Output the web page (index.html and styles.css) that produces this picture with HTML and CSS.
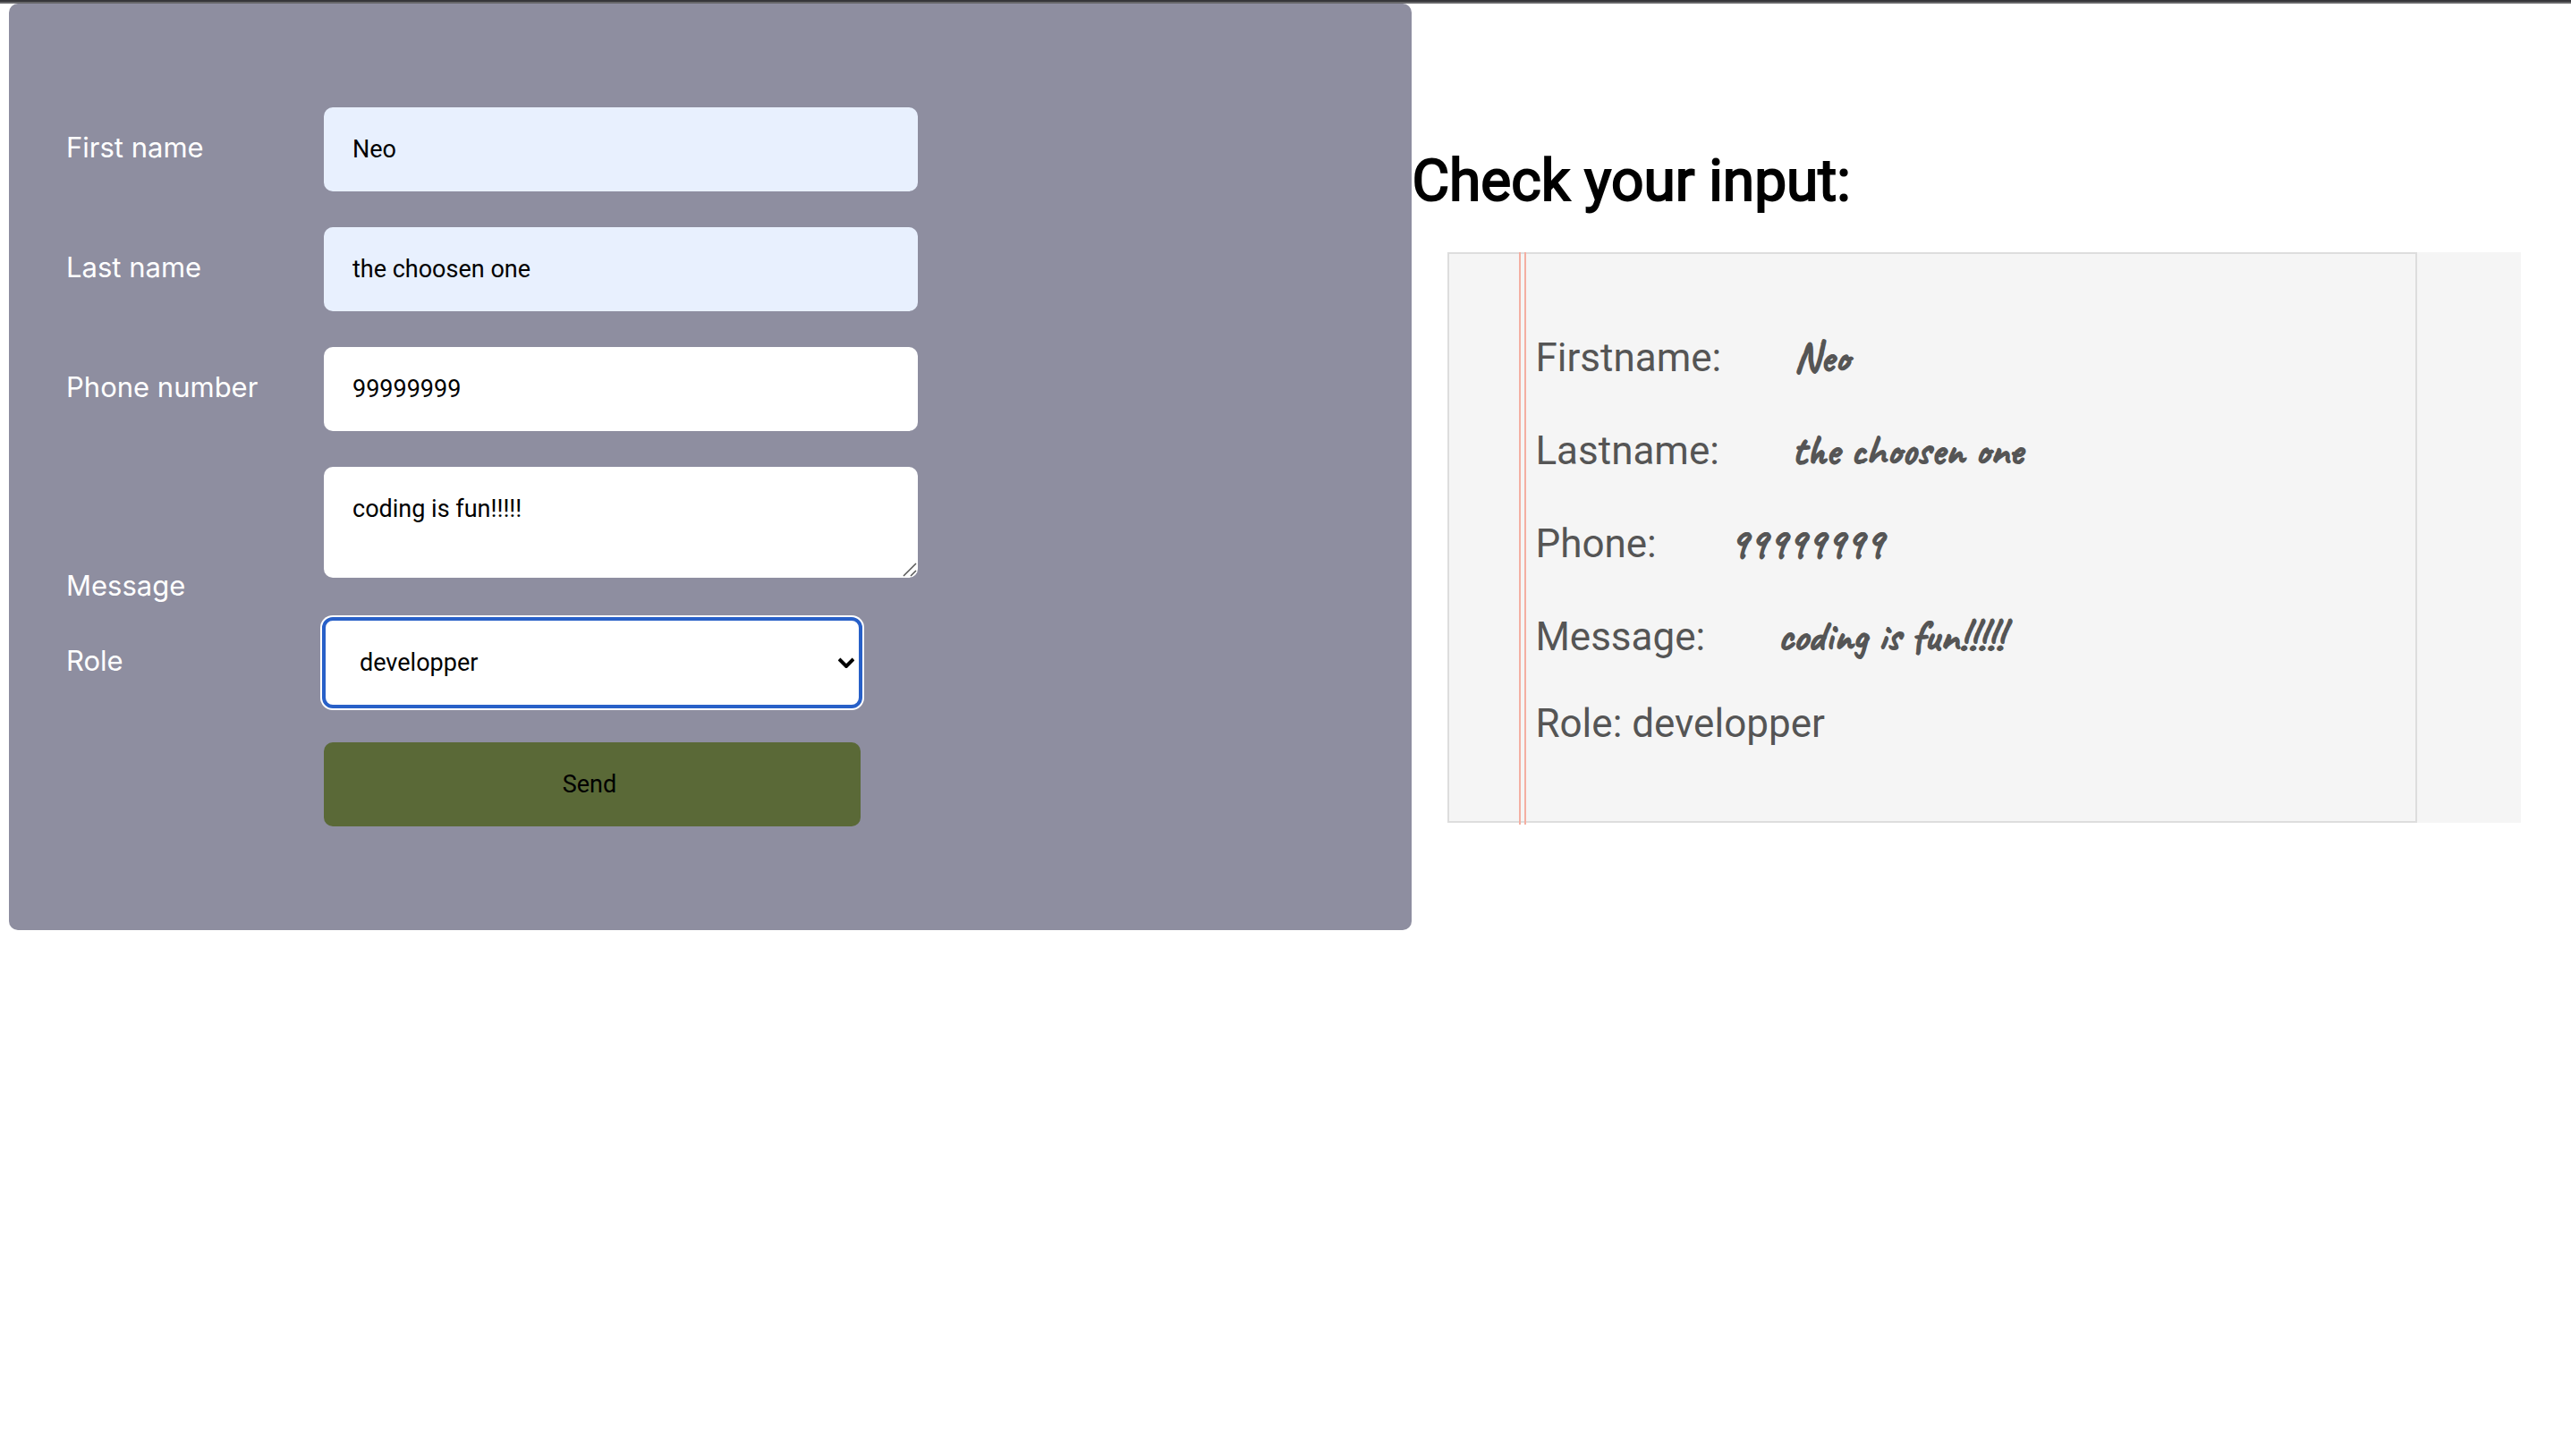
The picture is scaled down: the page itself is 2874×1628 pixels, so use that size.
FILE: index.html
```html
<!DOCTYPE html>
<html lang="en">
<head>
  <meta charset="utf-8">
  <title>Form</title>
  <link rel="stylesheet" href="styles.css">
</head>
<body>
  <main class="layout">
    <form class="form">
      <div class="row">
        <label class="label" for="firstname">First name</label>
        <input class="field field-filled" id="firstname" type="text" value="Neo">
      </div>
      <div class="row">
        <label class="label" for="lastname">Last name</label>
        <input class="field field-filled" id="lastname" type="text" value="the choosen one">
      </div>
      <div class="row">
        <label class="label" for="phone">Phone number</label>
        <input class="field" id="phone" type="tel" value="99999999">
      </div>
      <div class="row row-message">
        <label class="label label-message" for="message">Message</label>
        <div class="message-box">
          <textarea class="field field-message" id="message">coding is fun!!!!!</textarea>
          <svg class="grip" viewBox="0 0 16 16" aria-hidden="true"><path d="M1 15 15 1M9 15 15 9"/></svg>
        </div>
      </div>
      <div class="row">
        <label class="label" for="role">Role</label>
        <div class="select-box">
          <select class="field field-select" id="role">
            <option>developper</option>
          </select>
          <svg class="chevron" viewBox="0 0 18 12" aria-hidden="true"><path d="M1 2 9 10 17 2"/></svg>
        </div>
      </div>
      <div class="row row-action">
        <button class="send" type="button">Send</button>
      </div>
    </form>

    <section class="preview">
      <h1 class="title">Check your input:</h1>
      <div class="paper">
        <div class="sheet">
          <p class="line">Firstname: <span class="written">Neo</span></p>
          <p class="line">Lastname: <span class="written">the choosen one</span></p>
          <p class="line">Phone: <span class="written">99999999</span></p>
          <p class="line">Message: <span class="written">coding is fun!!!!!</span></p>
          <p class="line line-role">Role: developper</p>
        </div>
      </div>
    </section>
  </main>
</body>
</html>
```
FILE: styles.css
```css
* {
  box-sizing: border-box;
}

body {
  margin: 0;
  border-top: 2px solid #36363a;
  background: #fff;
  font-family: Roboto, sans-serif;
}

.layout {
  display: grid;
  grid-template-columns: 61fr 50fr;
  align-items: start;
  padding: 0 10px;
  border-top: 2px solid #666669;
}

.form {
  padding: 96px 64px;
  border-radius: 10px;
  background: #8e8ea0;
}

.row {
  display: grid;
  grid-template-columns: 288px minmax(0, 664px);
  align-items: center;
  padding: 20px 0;
}

.row-message {
  align-items: end;
  padding-bottom: 0;
}

.row-action {
  grid-template-columns: minmax(0, 600px);
  padding-left: 288px;
}

.label {
  padding-bottom: 4px;
  color: #fff;
  font-family: Inter, sans-serif;
  font-size: 31px;
  line-height: 40px;
}

.label-message {
  padding-bottom: 0;
  line-height: 34px;
}

.field {
  display: block;
  width: 100%;
  margin: 0;
  padding: 31px 32px;
  border: 0;
  border-radius: 10px;
  background: #fff;
  color: #000;
  font-family: Roboto, sans-serif;
  font-size: 27px;
  line-height: 32px;
}

.field-filled {
  background: #e8f0fe;
}

.message-box {
  position: relative;
  margin-bottom: 26px;
}

.field-message {
  height: 124px;
  resize: none;
}

.grip {
  position: absolute;
  right: 1px;
  bottom: 1px;
  width: 16px;
  height: 16px;
  fill: none;
  stroke: #555;
  stroke-width: 1.5;
}

.select-box {
  position: relative;
  max-width: 600px;
}

.field-select {
  padding: 33px 40px;
  appearance: none;
  outline: 4px solid #2860c8;
  outline-offset: -2px;
  box-shadow: 0 0 0 4px #fff;
}

.chevron {
  position: absolute;
  top: 43px;
  right: 7px;
  width: 18px;
  height: 12px;
  fill: none;
  stroke: #000;
  stroke-width: 4;
  pointer-events: none;
}

.send {
  padding: 31px 36px 31px 30px;
  border: 0;
  border-radius: 10px;
  background: #5a6937;
  color: #000;
  font-family: Roboto, sans-serif;
  font-size: 27px;
  line-height: 32px;
}

.title {
  margin: 0;
  padding: 159px 0 39px;
  font-size: 64px;
  font-weight: 400;
  line-height: 80px;
  -webkit-text-stroke: 2px #000;
}

.paper {
  margin: 0 46px 0 40px;
  padding-right: 116px;
  background: #f5f5f5;
}

.sheet {
  position: relative;
  padding: 64px 96px;
  border: 2px solid #ddd;
}

.sheet::before {
  content: "";
  position: absolute;
  top: -2px;
  bottom: -4px;
  left: 78px;
  width: 4px;
  border: solid #f4afa2;
  border-width: 0 2px;
}

.line {
  margin: 0;
  color: #555;
  font-size: 44px;
  line-height: 104px;
}

.line-role {
  line-height: 90px;
}

.written {
  margin-left: 70px;
  font-family: Caveat, cursive;
  font-size: 48px;
  font-weight: 400;
  line-height: 1;
  -webkit-text-stroke: 2px #555;
}
```
